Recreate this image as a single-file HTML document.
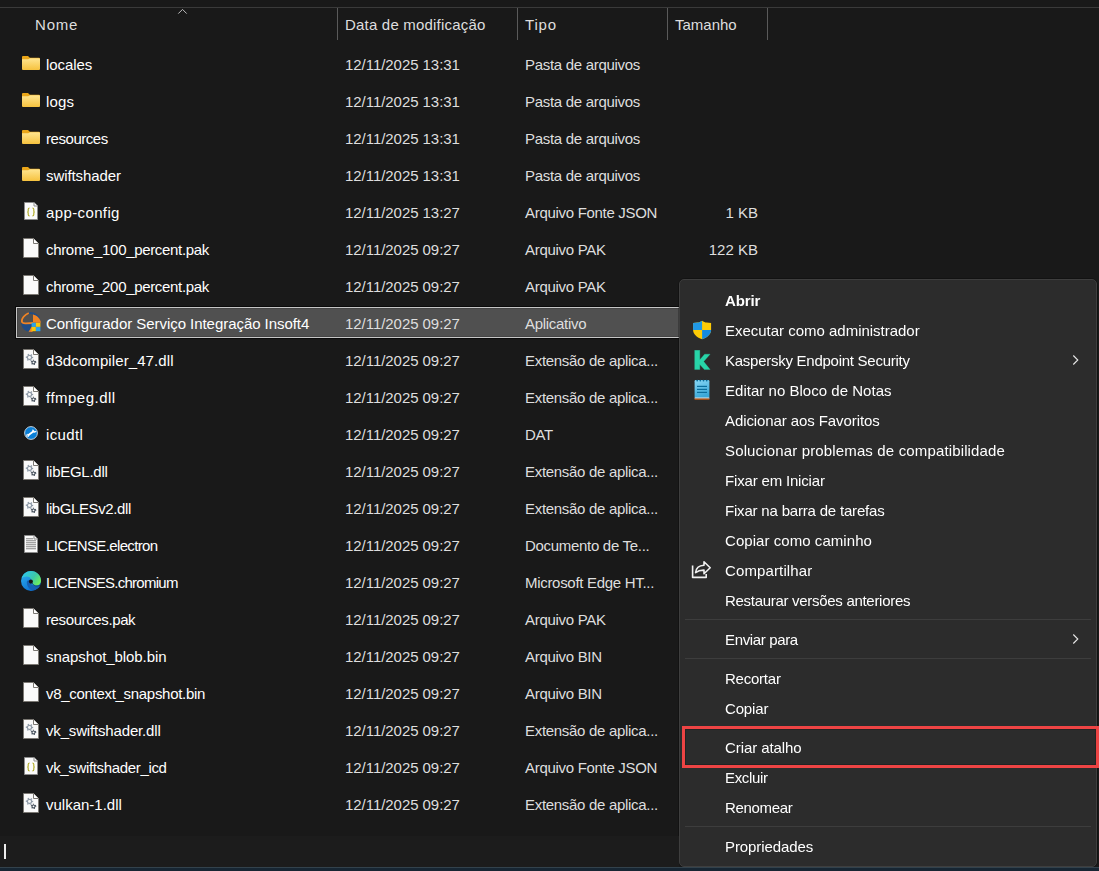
<!DOCTYPE html><html><head><meta charset="utf-8"><style>
*{margin:0;padding:0;box-sizing:border-box}
html,body{width:1099px;height:871px;overflow:hidden;background:#191919}
body{position:relative;font-family:"Liberation Sans",sans-serif;font-size:15px;color:#fff}
.a{position:absolute;white-space:nowrap}
.ic{position:absolute}
.row{position:absolute;left:0;width:1099px;height:37px}
.t{position:absolute;top:0;line-height:37px;white-space:nowrap}
.n{left:46px;color:#fff}
.d{left:345px;color:#dedede;letter-spacing:-0.05px}
.ty{left:525px;color:#dedede;letter-spacing:-0.3px}
.sz{right:341px;color:#dedede}
.hdr{position:absolute;top:1px;height:40px;line-height:48px;color:#dedede}
.mi{line-height:30px;color:#ffffff}
.sep{position:absolute;top:8px;width:1px;height:32px;background:#5a5a5a}
</style></head><body>
<div class="a" style="left:0;top:7px;width:1099px;height:1px;background:#3a3a3a"></div>
<div class="hdr" style="left:35px;letter-spacing:0.8px">Nome</div>
<div class="hdr" style="left:345px;letter-spacing:0.2px">Data de modificação</div>
<div class="hdr" style="left:525px;letter-spacing:0.8px">Tipo</div>
<div class="hdr" style="left:675px">Tamanho</div>
<div class="sep" style="left:337px"></div><div class="sep" style="left:517px"></div><div class="sep" style="left:667px"></div><div class="sep" style="left:767px"></div>
<svg class="ic" style="left:177px;top:8px" width="12" height="8" viewBox="0 0 12 8"><path d="M1.3 5.6 L5.5 1.4 L9.7 5.6" fill="none" stroke="#bdbdbd" stroke-width="1"/></svg>

<svg class="ic" style="left:22px;top:56px" width="18" height="14" viewBox="0 0 18 14"><defs><linearGradient id="fg46" x1="0" y1="0" x2="0" y2="1"><stop offset="0" stop-color="#ffe590"/><stop offset="1" stop-color="#f6c23e"/></linearGradient></defs><path d="M0 1 Q0 0 1 0 H6 L7.8 1.8 H17 Q18 1.8 18 2.8 V4 H0 Z" fill="#eaa619"/><path d="M0 3.2 H6.2 L8 2.3 H17 Q18 2.3 18 3.3 V13 Q18 14 17 14 H1 Q0 14 0 13 Z" fill="url(#fg46)"/></svg>
<div class="row" style="top:46px"><div class="t n" style="letter-spacing:-0.066px">locales</div><div class="t d">12/11/2025 13:31</div><div class="t ty">Pasta de arquivos</div></div>
<svg class="ic" style="left:22px;top:93px" width="18" height="14" viewBox="0 0 18 14"><defs><linearGradient id="fg83" x1="0" y1="0" x2="0" y2="1"><stop offset="0" stop-color="#ffe590"/><stop offset="1" stop-color="#f6c23e"/></linearGradient></defs><path d="M0 1 Q0 0 1 0 H6 L7.8 1.8 H17 Q18 1.8 18 2.8 V4 H0 Z" fill="#eaa619"/><path d="M0 3.2 H6.2 L8 2.3 H17 Q18 2.3 18 3.3 V13 Q18 14 17 14 H1 Q0 14 0 13 Z" fill="url(#fg83)"/></svg>
<div class="row" style="top:83px"><div class="t n" style="letter-spacing:0.133px">logs</div><div class="t d">12/11/2025 13:31</div><div class="t ty">Pasta de arquivos</div></div>
<svg class="ic" style="left:22px;top:130px" width="18" height="14" viewBox="0 0 18 14"><defs><linearGradient id="fg120" x1="0" y1="0" x2="0" y2="1"><stop offset="0" stop-color="#ffe590"/><stop offset="1" stop-color="#f6c23e"/></linearGradient></defs><path d="M0 1 Q0 0 1 0 H6 L7.8 1.8 H17 Q18 1.8 18 2.8 V4 H0 Z" fill="#eaa619"/><path d="M0 3.2 H6.2 L8 2.3 H17 Q18 2.3 18 3.3 V13 Q18 14 17 14 H1 Q0 14 0 13 Z" fill="url(#fg120)"/></svg>
<div class="row" style="top:120px"><div class="t n" style="letter-spacing:-0.449px">resources</div><div class="t d">12/11/2025 13:31</div><div class="t ty">Pasta de arquivos</div></div>
<svg class="ic" style="left:22px;top:167px" width="18" height="14" viewBox="0 0 18 14"><defs><linearGradient id="fg157" x1="0" y1="0" x2="0" y2="1"><stop offset="0" stop-color="#ffe590"/><stop offset="1" stop-color="#f6c23e"/></linearGradient></defs><path d="M0 1 Q0 0 1 0 H6 L7.8 1.8 H17 Q18 1.8 18 2.8 V4 H0 Z" fill="#eaa619"/><path d="M0 3.2 H6.2 L8 2.3 H17 Q18 2.3 18 3.3 V13 Q18 14 17 14 H1 Q0 14 0 13 Z" fill="url(#fg157)"/></svg>
<div class="row" style="top:157px"><div class="t n" style="letter-spacing:-0.08px">swiftshader</div><div class="t d">12/11/2025 13:31</div><div class="t ty">Pasta de arquivos</div></div>
<svg class="ic" style="left:24px;top:202px" width="14" height="18" viewBox="0 0 14 18"><path d="M0.5 0.5 H10 L13.5 4 V17.5 H0.5 Z" fill="#fbfbfb" stroke="#8c8c8c" stroke-width="1"/><path d="M10 0.5 V4 H13.5" fill="#ffffff" stroke="#8c8c8c" stroke-width="1"/><g fill="none" stroke="#b3ad2c" stroke-width="1.15"><path d="M5.6 6 Q4.2 6 4.2 7.4 V9.2 Q4.2 10 3.2 10 Q4.2 10 4.2 10.8 V12.6 Q4.2 14 5.6 14"/><path d="M8.4 6 Q9.8 6 9.8 7.4 V9.2 Q9.8 10 10.8 10 Q9.8 10 9.8 10.8 V12.6 Q9.8 14 8.4 14"/></g></svg>
<div class="row" style="top:194px"><div class="t n" style="letter-spacing:0.378px">app-config</div><div class="t d">12/11/2025 13:27</div><div class="t ty">Arquivo Fonte JSON</div><div class="t sz">1 KB</div></div>
<svg class="ic" style="left:23px;top:238px" width="16" height="20" viewBox="0 0 16 20"><path d="M0.5 0.5 H10.5 L15.5 5.5 V19.5 H0.5 Z" fill="#fafafa" stroke="#7b7873" stroke-width="1"/><path d="M10.5 0.5 V5.5 H15.5" fill="#ffffff" stroke="#7b7873" stroke-width="1"/></svg>
<div class="row" style="top:231px"><div class="t n" style="letter-spacing:-0.324px">chrome_100_percent.pak</div><div class="t d">12/11/2025 09:27</div><div class="t ty">Arquivo PAK</div><div class="t sz">122 KB</div></div>
<svg class="ic" style="left:23px;top:275px" width="16" height="20" viewBox="0 0 16 20"><path d="M0.5 0.5 H10.5 L15.5 5.5 V19.5 H0.5 Z" fill="#fafafa" stroke="#7b7873" stroke-width="1"/><path d="M10.5 0.5 V5.5 H15.5" fill="#ffffff" stroke="#7b7873" stroke-width="1"/></svg>
<div class="row" style="top:268px"><div class="t n" style="letter-spacing:-0.324px">chrome_200_percent.pak</div><div class="t d">12/11/2025 09:27</div><div class="t ty">Arquivo PAK</div></div>
<div class="a" style="left:15px;top:306px;width:760px;height:33px;background:#0a0a0a"></div><div class="a" style="left:16px;top:307px;width:758px;height:31px;background:#c6c6c6"></div><div class="a" style="left:17px;top:308px;width:756px;height:29px;background:#454545"></div><div class="a" style="left:18px;top:309px;width:754px;height:27px;background:#505050"></div>
<svg class="ic" style="left:21px;top:312px" width="20" height="20" viewBox="0 0 20 20"><path d="M0.2 11.2 C0.6 16 4.2 19.4 8.6 19.8 L11 11.2 Z" fill="#1f4c86"/><path d="M7.2 0.6 C11.8 -0.4 16.6 1.6 19 5.8 L17.2 6.4 C15 3.2 11.6 1.6 8 2.2 Z" fill="#1f4c86"/><path d="M12 2.6 C15.8 3.4 19.2 6.4 19.9 10.8 L12 10.8 Z" fill="#f08424"/><path d="M7.8 1 C3.6 2.6 0.4 6.6 0.9 9.6 C1.2 11.2 3 11.4 5 11.3 L12 11" fill="none" stroke="#f08424" stroke-width="1.8"/><path d="M7.6 19.8 L10.8 14.4 L11.6 19.9 Z" fill="#f08424"/><rect x="10.6" y="10.8" width="4.3" height="4.1" fill="#2aa3ea"/><rect x="14.9" y="10.8" width="4.5" height="4.1" fill="#f7c60a"/><rect x="10.6" y="14.9" width="4.3" height="4.3" fill="#f7c60a"/><rect x="14.9" y="14.9" width="4.5" height="4.3" fill="#2aa3ea"/></svg>
<div class="row" style="top:305px"><div class="t n" style="letter-spacing:-0.048px">Configurador Serviço Integração Insoft4</div><div class="t d">12/11/2025 09:27</div><div class="t ty">Aplicativo</div></div>
<svg class="ic" style="left:23px;top:349px" width="16" height="20" viewBox="0 0 16 20"><path d="M0.5 0.5 H10.5 L15.5 5.5 V19.5 H0.5 Z" fill="#fafafa" stroke="#7b7873" stroke-width="1"/><path d="M10.5 0.5 V5.5 H15.5" fill="#ffffff" stroke="#7b7873" stroke-width="1"/><g transform="translate(6.5,8.4)" fill="none" stroke="#8e9aa7"><circle r="2.1" stroke-width="1.3"/><circle r="3.05" stroke-width="1.3" stroke-dasharray="1.3 1.894" transform="rotate(-12)"/></g><g transform="translate(10.5,13.4)" fill="none" stroke="#4b5560"><circle r="1.45" stroke-width="1.1"/><circle r="2.2" stroke-width="1.1" stroke-dasharray="1 1.30" transform="rotate(-13)"/></g></svg>
<div class="row" style="top:342px"><div class="t n" style="letter-spacing:0.094px">d3dcompiler_47.dll</div><div class="t d">12/11/2025 09:27</div><div class="t ty">Extensão de aplica...</div></div>
<svg class="ic" style="left:23px;top:386px" width="16" height="20" viewBox="0 0 16 20"><path d="M0.5 0.5 H10.5 L15.5 5.5 V19.5 H0.5 Z" fill="#fafafa" stroke="#7b7873" stroke-width="1"/><path d="M10.5 0.5 V5.5 H15.5" fill="#ffffff" stroke="#7b7873" stroke-width="1"/><g transform="translate(6.5,8.4)" fill="none" stroke="#8e9aa7"><circle r="2.1" stroke-width="1.3"/><circle r="3.05" stroke-width="1.3" stroke-dasharray="1.3 1.894" transform="rotate(-12)"/></g><g transform="translate(10.5,13.4)" fill="none" stroke="#4b5560"><circle r="1.45" stroke-width="1.1"/><circle r="2.2" stroke-width="1.1" stroke-dasharray="1 1.30" transform="rotate(-13)"/></g></svg>
<div class="row" style="top:379px"><div class="t n" style="letter-spacing:0.489px">ffmpeg.dll</div><div class="t d">12/11/2025 09:27</div><div class="t ty">Extensão de aplica...</div></div>
<svg class="ic" style="left:24px;top:426px" width="14" height="14" viewBox="0 0 14 14"><circle cx="7" cy="7" r="6.4" fill="#0b7fd6" stroke="#d6dde2" stroke-width="0.9"/><path d="M4.2 9.2 L9.6 5.2" stroke="#ffffff" stroke-width="1.9" stroke-linecap="round"/><circle cx="3.6" cy="9.6" r="1.2" fill="none" stroke="#ffffff" stroke-width="0.9"/><path d="M9 3.6 Q8.6 5.6 10.4 6 Q11.6 6 12 5" fill="none" stroke="#ffffff" stroke-width="1.3"/></svg>
<div class="row" style="top:416px"><div class="t n" style="letter-spacing:0.36px">icudtl</div><div class="t d">12/11/2025 09:27</div><div class="t ty">DAT</div></div>
<svg class="ic" style="left:23px;top:460px" width="16" height="20" viewBox="0 0 16 20"><path d="M0.5 0.5 H10.5 L15.5 5.5 V19.5 H0.5 Z" fill="#fafafa" stroke="#7b7873" stroke-width="1"/><path d="M10.5 0.5 V5.5 H15.5" fill="#ffffff" stroke="#7b7873" stroke-width="1"/><g transform="translate(6.5,8.4)" fill="none" stroke="#8e9aa7"><circle r="2.1" stroke-width="1.3"/><circle r="3.05" stroke-width="1.3" stroke-dasharray="1.3 1.894" transform="rotate(-12)"/></g><g transform="translate(10.5,13.4)" fill="none" stroke="#4b5560"><circle r="1.45" stroke-width="1.1"/><circle r="2.2" stroke-width="1.1" stroke-dasharray="1 1.30" transform="rotate(-13)"/></g></svg>
<div class="row" style="top:453px"><div class="t n" style="letter-spacing:-0.267px">libEGL.dll</div><div class="t d">12/11/2025 09:27</div><div class="t ty">Extensão de aplica...</div></div>
<svg class="ic" style="left:23px;top:497px" width="16" height="20" viewBox="0 0 16 20"><path d="M0.5 0.5 H10.5 L15.5 5.5 V19.5 H0.5 Z" fill="#fafafa" stroke="#7b7873" stroke-width="1"/><path d="M10.5 0.5 V5.5 H15.5" fill="#ffffff" stroke="#7b7873" stroke-width="1"/><g transform="translate(6.5,8.4)" fill="none" stroke="#8e9aa7"><circle r="2.1" stroke-width="1.3"/><circle r="3.05" stroke-width="1.3" stroke-dasharray="1.3 1.894" transform="rotate(-12)"/></g><g transform="translate(10.5,13.4)" fill="none" stroke="#4b5560"><circle r="1.45" stroke-width="1.1"/><circle r="2.2" stroke-width="1.1" stroke-dasharray="1 1.30" transform="rotate(-13)"/></g></svg>
<div class="row" style="top:490px"><div class="t n" style="letter-spacing:-0.4px">libGLESv2.dll</div><div class="t d">12/11/2025 09:27</div><div class="t ty">Extensão de aplica...</div></div>
<svg class="ic" style="left:24px;top:535px" width="14" height="18" viewBox="0 0 14 18"><path d="M0.5 0.5 H10 L13.5 4 V17.5 H0.5 Z" fill="#fbfbfb" stroke="#8c8c8c" stroke-width="1"/><path d="M10 0.5 V4 H13.5" fill="#ffffff" stroke="#8c8c8c" stroke-width="1"/><g fill="#9a9a9a"><rect x="2" y="3.1" width="7" height="1.2"/><rect x="2" y="5.1" width="10" height="1.2"/><rect x="2" y="7.1" width="10" height="1.2"/><rect x="2" y="9.1" width="10" height="1.2"/><rect x="2" y="11.1" width="10" height="1.2"/><rect x="2" y="13.1" width="10" height="1.2"/></g></svg>
<div class="row" style="top:527px"><div class="t n" style="letter-spacing:-0.64px">LICENSE.electron</div><div class="t d">12/11/2025 09:27</div><div class="t ty">Documento de Te...</div></div>
<svg class="ic" style="left:21px;top:571px" width="20" height="20" viewBox="0 0 20 20"><defs><linearGradient id="eb" x1="0" y1="0" x2="0.6" y2="1"><stop offset="0" stop-color="#2fb4f0"/><stop offset="1" stop-color="#0c6fd0"/></linearGradient><linearGradient id="eg" x1="0.1" y1="0.2" x2="1" y2="0.7"><stop offset="0" stop-color="#2ec6e6"/><stop offset="0.55" stop-color="#3dc8a8"/><stop offset="1" stop-color="#6ef05a"/></linearGradient></defs><circle cx="10" cy="10" r="10" fill="url(#eb)"/><path d="M5.8 11 C5.8 15.5 8.5 18.6 11.5 19.6 C15 19 18 17 19 15 C16 15.6 12.5 15 10.5 13.5 C9 12.4 8.5 10.5 9 9 C7.2 9 5.8 9.8 5.8 11 Z" fill="#1461b4"/><path d="M0.6 7.4 C1.8 3 5.5 0 10 0 C15.8 0 20 4.6 20 9.4 C20 12.6 17.6 14.6 14.8 14.6 C12.6 14.6 11 13.2 11 11.6 C11 8.6 9 5.6 6 5.6 C3.6 5.6 1.6 6.4 0.6 7.4 Z" fill="url(#eg)"/><path d="M11 11.8 C11.8 13.8 13.8 15 16 15 C17.4 15 18.6 14.6 19.4 14" fill="none" stroke="#12305a" stroke-width="0.9" opacity="0.8"/><circle cx="9.9" cy="10.6" r="2.05" fill="#141414"/></svg>
<div class="row" style="top:564px"><div class="t n" style="letter-spacing:-0.738px">LICENSES.chromium</div><div class="t d">12/11/2025 09:27</div><div class="t ty">Microsoft Edge HT...</div></div>
<svg class="ic" style="left:23px;top:608px" width="16" height="20" viewBox="0 0 16 20"><path d="M0.5 0.5 H10.5 L15.5 5.5 V19.5 H0.5 Z" fill="#fafafa" stroke="#7b7873" stroke-width="1"/><path d="M10.5 0.5 V5.5 H15.5" fill="#ffffff" stroke="#7b7873" stroke-width="1"/></svg>
<div class="row" style="top:601px"><div class="t n" style="letter-spacing:-0.383px">resources.pak</div><div class="t d">12/11/2025 09:27</div><div class="t ty">Arquivo PAK</div></div>
<svg class="ic" style="left:23px;top:645px" width="16" height="20" viewBox="0 0 16 20"><path d="M0.5 0.5 H10.5 L15.5 5.5 V19.5 H0.5 Z" fill="#fafafa" stroke="#7b7873" stroke-width="1"/><path d="M10.5 0.5 V5.5 H15.5" fill="#ffffff" stroke="#7b7873" stroke-width="1"/></svg>
<div class="row" style="top:638px"><div class="t n" style="letter-spacing:-0.075px">snapshot_blob.bin</div><div class="t d">12/11/2025 09:27</div><div class="t ty">Arquivo BIN</div></div>
<svg class="ic" style="left:23px;top:682px" width="16" height="20" viewBox="0 0 16 20"><path d="M0.5 0.5 H10.5 L15.5 5.5 V19.5 H0.5 Z" fill="#fafafa" stroke="#7b7873" stroke-width="1"/><path d="M10.5 0.5 V5.5 H15.5" fill="#ffffff" stroke="#7b7873" stroke-width="1"/></svg>
<div class="row" style="top:675px"><div class="t n" style="letter-spacing:-0.3px">v8_context_snapshot.bin</div><div class="t d">12/11/2025 09:27</div><div class="t ty">Arquivo BIN</div></div>
<svg class="ic" style="left:23px;top:719px" width="16" height="20" viewBox="0 0 16 20"><path d="M0.5 0.5 H10.5 L15.5 5.5 V19.5 H0.5 Z" fill="#fafafa" stroke="#7b7873" stroke-width="1"/><path d="M10.5 0.5 V5.5 H15.5" fill="#ffffff" stroke="#7b7873" stroke-width="1"/><g transform="translate(6.5,8.4)" fill="none" stroke="#8e9aa7"><circle r="2.1" stroke-width="1.3"/><circle r="3.05" stroke-width="1.3" stroke-dasharray="1.3 1.894" transform="rotate(-12)"/></g><g transform="translate(10.5,13.4)" fill="none" stroke="#4b5560"><circle r="1.45" stroke-width="1.1"/><circle r="2.2" stroke-width="1.1" stroke-dasharray="1 1.30" transform="rotate(-13)"/></g></svg>
<div class="row" style="top:712px"><div class="t n" style="letter-spacing:-0.165px">vk_swiftshader.dll</div><div class="t d">12/11/2025 09:27</div><div class="t ty">Extensão de aplica...</div></div>
<svg class="ic" style="left:24px;top:757px" width="14" height="18" viewBox="0 0 14 18"><path d="M0.5 0.5 H10 L13.5 4 V17.5 H0.5 Z" fill="#fbfbfb" stroke="#8c8c8c" stroke-width="1"/><path d="M10 0.5 V4 H13.5" fill="#ffffff" stroke="#8c8c8c" stroke-width="1"/><g fill="none" stroke="#b3ad2c" stroke-width="1.15"><path d="M5.6 6 Q4.2 6 4.2 7.4 V9.2 Q4.2 10 3.2 10 Q4.2 10 4.2 10.8 V12.6 Q4.2 14 5.6 14"/><path d="M8.4 6 Q9.8 6 9.8 7.4 V9.2 Q9.8 10 10.8 10 Q9.8 10 9.8 10.8 V12.6 Q9.8 14 8.4 14"/></g></svg>
<div class="row" style="top:749px"><div class="t n" style="letter-spacing:-0.341px">vk_swiftshader_icd</div><div class="t d">12/11/2025 09:27</div><div class="t ty">Arquivo Fonte JSON</div></div>
<svg class="ic" style="left:23px;top:793px" width="16" height="20" viewBox="0 0 16 20"><path d="M0.5 0.5 H10.5 L15.5 5.5 V19.5 H0.5 Z" fill="#fafafa" stroke="#7b7873" stroke-width="1"/><path d="M10.5 0.5 V5.5 H15.5" fill="#ffffff" stroke="#7b7873" stroke-width="1"/><g transform="translate(6.5,8.4)" fill="none" stroke="#8e9aa7"><circle r="2.1" stroke-width="1.3"/><circle r="3.05" stroke-width="1.3" stroke-dasharray="1.3 1.894" transform="rotate(-12)"/></g><g transform="translate(10.5,13.4)" fill="none" stroke="#4b5560"><circle r="1.45" stroke-width="1.1"/><circle r="2.2" stroke-width="1.1" stroke-dasharray="1 1.30" transform="rotate(-13)"/></g></svg>
<div class="row" style="top:786px"><div class="t n" style="letter-spacing:0.0px">vulkan-1.dll</div><div class="t d">12/11/2025 09:27</div><div class="t ty">Extensão de aplica...</div></div>
<div class="a" style="left:0;top:0;width:1099px;height:871px;will-change:transform">
<div class="a" style="left:678px;top:278px;width:420px;height:590px;border-radius:7px;background:rgba(0,0,0,0.25)"></div>
<div class="a" style="left:679px;top:279px;width:418px;height:588px;border-radius:5px;background:#2c2c2c;border:1px solid #3e3e3e"></div>
<div class="a mi" style="left:725px;top:286px;letter-spacing:-0.1px;font-weight:bold;">Abrir</div>
<div class="a mi" style="left:725px;top:316px;letter-spacing:-0.015px;">Executar como administrador</div>
<svg class="ic" style="left:693px;top:320px" width="19" height="20" viewBox="0 -1 19 20"><path d="M9.1 -0.3 C7.6 0.8 6 1.3 4.5 1.6 C3 1.9 1.5 2 0.1 2 V9 C0.1 13.2 4 16.6 9.1 18.3 C14.2 16.6 18.1 13.2 18.1 9 V2 C16.7 2 15.2 1.9 13.7 1.6 C12.2 1.3 10.6 0.8 9.1 -0.3 Z" fill="#fdcb06"/><path d="M9.1 -0.3 V9 H0.1 V2 C1.5 2 3 1.9 4.5 1.6 C6 1.3 7.6 0.8 9.1 -0.3 Z" fill="#1f98e6"/><path d="M9.1 9 H18.1 C18.1 13.2 14.2 16.6 9.1 18.3 Z" fill="#158ae0"/></svg>
<div class="a mi" style="left:725px;top:346px;letter-spacing:-0.262px;">Kaspersky Endpoint Security</div>
<svg class="ic" style="left:694px;top:350px" width="17" height="20" viewBox="0 0 17 20"><path d="M0.7 0.2 H5.8 V9.8 L10.6 4.2 H16.1 L9.7 11.5 L16.1 19.6 H10.4 L5.8 14.6 V19.6 H0.7 Z" fill="#28d4a8" stroke="#28d4a8" stroke-width="0.3" stroke-linejoin="round"/></svg>
<svg class="ic" style="left:1071px;top:354px" width="10" height="12" viewBox="0 0 10 12"><path d="M2.3 1.5 L6.8 6 L2.3 10.5" fill="none" stroke="#e8e8e8" stroke-width="1.1"/></svg>
<div class="a mi" style="left:725px;top:376px;letter-spacing:0.026px;">Editar no Bloco de Notas</div>
<svg class="ic" style="left:694px;top:379px" width="16" height="21" viewBox="0 0 16 21"><defs><linearGradient id="np" x1="0" y1="0" x2="0.3" y2="1"><stop offset="0" stop-color="#8ad8f5"/><stop offset="1" stop-color="#3aa8d8"/></linearGradient></defs><rect x="0.6" y="1" width="14.8" height="18" rx="1.2" fill="url(#np)"/><rect x="0.6" y="18.5" width="14.8" height="1.2" fill="#e4e4e4"/><rect x="0.6" y="19.6" width="14.8" height="1.2" fill="#c05a16"/><g fill="#0b6e9c"><rect x="3" y="6.8" width="10" height="1.2"/><rect x="3" y="9.8" width="10" height="1.2"/><rect x="3" y="12.8" width="10" height="1.2"/><circle cx="3.2" cy="1.6" r="0.9"/><circle cx="6.3" cy="1.6" r="0.9"/><circle cx="9.5" cy="1.6" r="0.9"/><circle cx="12.7" cy="1.6" r="0.9"/></g></svg>
<div class="a mi" style="left:725px;top:406px;letter-spacing:-0.091px;">Adicionar aos Favoritos</div>
<div class="a mi" style="left:725px;top:436px;letter-spacing:0.147px;">Solucionar problemas de compatibilidade</div>
<div class="a mi" style="left:725px;top:466px;letter-spacing:-0.173px;">Fixar em Iniciar</div>
<div class="a mi" style="left:725px;top:496px;letter-spacing:-0.191px;">Fixar na barra de tarefas</div>
<div class="a mi" style="left:725px;top:526px;letter-spacing:0.055px;">Copiar como caminho</div>
<div class="a mi" style="left:725px;top:556px;letter-spacing:0.128px;">Compartilhar</div>
<svg class="ic" style="left:691px;top:560px" width="21" height="19" viewBox="0 0 21 19"><g fill="none" stroke="#f2f2f2" stroke-width="1.6" stroke-linejoin="round"><path d="M1.6 5.5 V17.4 H15.2 V14"/><path d="M4.6 12.6 C5 8.4 7.5 5.6 13 5.3 V1.8 L19.2 7.8 L13 13.8 V10.1 C9 10 6.8 10.8 4.6 12.6 Z"/></g></svg>
<div class="a mi" style="left:725px;top:586px;letter-spacing:-0.296px;">Restaurar versões anteriores</div>
<div class="a" style="left:685px;top:619px;width:406px;height:1px;background:#3d3d3d"></div>
<div class="a mi" style="left:725px;top:625px;letter-spacing:-0.36px;">Enviar para</div>
<svg class="ic" style="left:1071px;top:633px" width="10" height="12" viewBox="0 0 10 12"><path d="M2.3 1.5 L6.8 6 L2.3 10.5" fill="none" stroke="#e8e8e8" stroke-width="1.1"/></svg>
<div class="a" style="left:685px;top:658px;width:406px;height:1px;background:#3d3d3d"></div>
<div class="a mi" style="left:725px;top:664px;letter-spacing:-0.229px;">Recortar</div>
<div class="a mi" style="left:725px;top:694px;letter-spacing:-0.16px;">Copiar</div>
<div class="a" style="left:685px;top:727px;width:406px;height:1px;background:#3d3d3d"></div>
<div class="a mi" style="left:725px;top:733px;letter-spacing:-0.09px;">Criar atalho</div>
<div class="a mi" style="left:725px;top:763px;letter-spacing:-0.333px;">Excluir</div>
<div class="a mi" style="left:725px;top:793px;letter-spacing:-0.343px;">Renomear</div>
<div class="a" style="left:685px;top:826px;width:406px;height:1px;background:#3d3d3d"></div>
<div class="a mi" style="left:725px;top:832px;letter-spacing:-0.091px;">Propriedades</div>
<div class="a" style="left:682px;top:726px;width:417px;height:42px;border:3px solid #ee4444;box-shadow:inset 0 0 0 1px rgba(0,0,0,0.2)"></div>
</div>
<div class="a" style="left:0;top:836px;width:679px;height:31px;background:#1c1c1c"></div>
<div class="a" style="left:4px;top:844px;width:1.5px;height:15px;background:#ececec"></div>
<div class="a" style="left:0;top:867px;width:1099px;height:4px;background:#172633"></div><div class="a" style="left:0;top:867px;width:1099px;height:1px;background:#33424c"></div>
</body></html>
